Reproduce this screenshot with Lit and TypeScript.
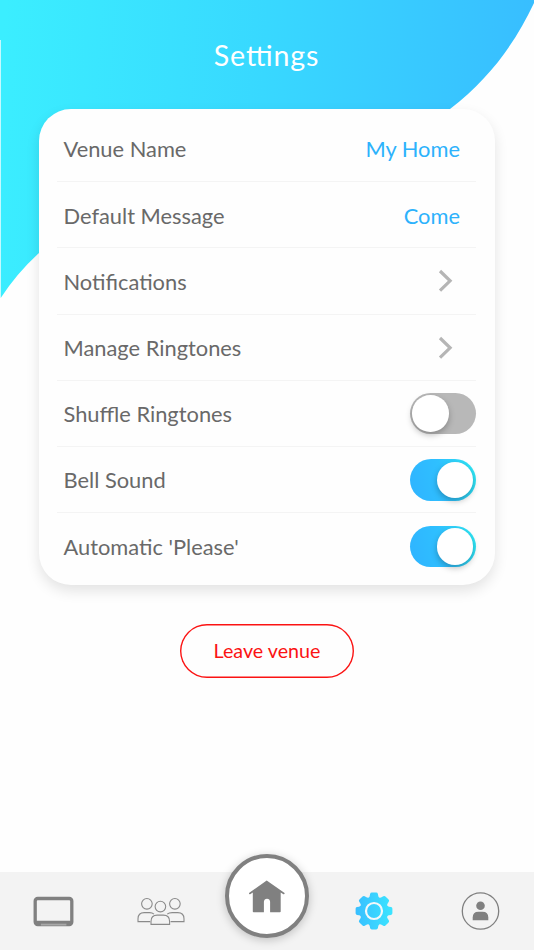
import { LitElement, html, css, svg } from "lit";
import { customElement, state } from "lit/decorators.js";

type Row = { label: string; kind: "value" | "link" | "toggle"; value?: string; on?: boolean };

@customElement("toggle-switch")
class ToggleSwitch extends LitElement {
  static properties = { on: { type: Boolean, reflect: true } };
  declare on: boolean;
  static styles = css`
    :host {
      display: flex;
      align-items: center;
      box-sizing: border-box;
      width: 66px;
      height: 41.5px;
      padding: 0 2.5px;
      border-radius: 21px;
      background: #b8b8b8;
    }
    :host([on]) {
      justify-content: flex-end;
      background: linear-gradient(75deg, #2fb6ff 10%, #2fc0ff 50%, #2ee6f5 95%);
    }
    .knob {
      width: 36.5px;
      height: 36.5px;
      border-radius: 50%;
      background: #fff;
      box-shadow: 0 3px 6px rgba(0, 0, 0, 0.26);
    }
  `;
  render() {
    return html`<div class="knob"></div>`;
  }
}

@customElement("app-root")
class AppRoot extends LitElement {
  @state() private rows: Row[] = [
    { label: "Venue Name", kind: "value", value: "My Home" },
    { label: "Default Message", kind: "value", value: "Come" },
    { label: "Notifications", kind: "link" },
    { label: "Manage Ringtones", kind: "link" },
    { label: "Shuffle Ringtones", kind: "toggle", on: false },
    { label: "Bell Sound", kind: "toggle", on: true },
    { label: "Automatic 'Please'", kind: "toggle", on: true },
  ];

  static styles = css`
    :host {
      display: flex;
      flex-direction: column;
      position: relative;
      box-sizing: border-box;
      height: 950px;
      overflow: hidden;
      background: #fefefe;
      font-family: Lato, Carlito, sans-serif;
      isolation: isolate;
    }
    .backdrop {
      position: absolute;
      left: 0;
      top: 0;
      z-index: -1;
    }
    .title {
      margin: 0;
      height: 109.4px;
      box-sizing: border-box;
      padding: 37px 1px 0 0;
      text-align: center;
      font-size: 28.6px;
      line-height: 36px;
      font-weight: 400;
      letter-spacing: 0.9px;
      font-feature-settings: "liga" 1;
      color: #fff;
    }
    .card {
      margin: 0 39px;
      height: 476px;
      box-sizing: border-box;
      padding: 6.7px 19.5px 0 18px;
      border-radius: 32px;
      background: #fefefe;
      box-shadow: 0 6px 14px rgba(0, 0, 0, 0.11);
    }
    .row {
      display: flex;
      align-items: center;
      justify-content: space-between;
      box-sizing: border-box;
      height: 66.2px;
      padding: 0.6px 0 0 6.5px;
      border-bottom: 1px solid #f4f4f4;
      font-size: 21.85px;
      color: #696969;
    }
    .row:last-child {
      border-bottom: 0;
    }
    .value {
      padding-right: 15.5px;
      color: #2db2fc;
    }
    .chevron {
      margin-right: 22px;
    }
    .leave {
      align-self: center;
      margin-top: 38.8px;
      width: 174px;
      height: 54px;
      box-sizing: border-box;
      border: 0;
      border-radius: 27px;
      box-shadow: inset 0 0 0 1.4px #fb1313;
      background: none;
      padding: 0 0 1px;
      font: 400 19.7px Lato, sans-serif;
      color: #fb1313;
    }
    .nav {
      display: grid;
      grid-template-columns: repeat(5, 1fr);
      align-items: center;
      justify-items: center;
      height: 78px;
      margin-top: auto;
      background: #f3f3f3;
    }
    .item {
      display: block;
      overflow: visible;
    }
    .home {
      display: flex;
      align-items: center;
      justify-content: center;
      box-sizing: border-box;
      width: 84px;
      height: 84px;
      margin-top: -30px;
      border: 4px solid #808080;
      border-radius: 50%;
      background: #fff;
      box-shadow: 0 2px 10px rgba(0, 0, 0, 0.22);
    }
  `;

  private control(row: Row) {
    if (row.kind === "value") return html`<span class="value">${row.value}</span>`;
    if (row.kind === "toggle") return html`<toggle-switch ?on=${row.on}></toggle-switch>`;
    return html`<svg class="chevron" width="16" height="24" viewBox="0 0 16 24">
      <path d="M2 2 L12.1 11.8 L2 21.7" fill="none" stroke="#b5b5b5" stroke-width="3.2" />
    </svg>`;
  }

  private gear() {
    const teeth = [0, 45, 90, 135, 180, 225, 270, 315];
    return html`<svg class="item" width="38" height="38" viewBox="-19 -19 38 38">
      <defs>
        <linearGradient id="g" gradientUnits="userSpaceOnUse" x1="-18" y1="0" x2="18" y2="0">
          <stop offset="0" stop-color="#38bfff" />
          <stop offset="1" stop-color="#3be4ff" />
        </linearGradient>
        <clipPath id="c">
          <circle r="14.4" />
          ${teeth.map(
            (a) =>
              svg`<path transform=${`rotate(${a})`} d="M-6.5 -13 Q-4.6 -13.2 -4.3 -15 L-3.9 -17 Q-3.6 -18.4 -2.2 -18.4 H2.2 Q3.6 -18.4 3.9 -17 L4.3 -15 Q4.6 -13.2 6.5 -13 V-8 H-6.5 Z" />`
          )}
        </clipPath>
      </defs>
      <rect x="-19" y="-19" width="38" height="38" fill="url(#g)" clip-path="url(#c)" />
      <circle r="8" fill="none" stroke="#f3f8fa" stroke-width="2.2" />
    </svg>`;
  }

  render() {
    return html`
      <svg class="backdrop" width="534" height="300" viewBox="0 0 534 300">
        <defs>
          <linearGradient id="sky" gradientUnits="userSpaceOnUse" x1="0" y1="80" x2="525" y2="115">
            <stop offset="0" stop-color="#3beeff" />
            <stop offset="0.5" stop-color="#38d8ff" />
            <stop offset="1" stop-color="#38beff" />
          </linearGradient>
        </defs>
        <path
          fill="url(#sky)"
          d="M0 0 H534 V3 C515 43 490 78 450 109 C380 165 120 165 39 253 Q17 273 0.7 298 V40 H0 Z"
        />
      </svg>
      <h1 class="title">Settings</h1>
      <section class="card">
        ${this.rows.map((row) => html`<div class="row"><span>${row.label}</span>${this.control(row)}</div>`)}
      </section>
      <button class="leave">Leave venue</button>
      <nav class="nav">
        <svg class="item" width="42" height="30" viewBox="-0.9 -0.7 42 30">
          <rect x="2.3" y="1.8" width="36.6" height="26" rx="2.5" fill="none" stroke="#808080" stroke-width="3.3" />
          <path d="M3 25.2 H38" stroke="#808080" stroke-width="2.2" />
          <path d="M8 27.9 H33.5" stroke="#a8a8a8" stroke-width="1.8" />
        </svg>
        <svg class="item" width="48" height="28" viewBox="-1 -0.8 48 28" fill="none" stroke="#8a8a8a" stroke-width="1.1">
          <circle cx="9.9" cy="6" r="5.3" />
          <circle cx="37.9" cy="6" r="5.3" />
          <circle cx="23.4" cy="8.8" r="5.3" />
          <path d="M13.2 23.8 H1 V21 Q1 14.8 7.2 14.8 H12.6 Q15.2 14.8 17 16.3" />
          <path d="M33.6 23.8 H47 V21 Q47 14.8 40.8 14.8 H35.2 Q32 14.8 30.2 16.3" />
          <path d="M14 26.6 V23.6 Q14 17.3 20.2 17.3 H26.4 Q32.6 17.3 32.6 23.6 V26.6 Z" />
        </svg>
        <div class="home">
          <svg width="38" height="34" viewBox="0 0 38 34">
            <path
              fill="#808080"
              d="M18.7 1.4 L36.6 14 Q36.8 15.6 35.4 15.2 L32.7 13.6 V32.4 Q32.7 33.2 31.9 33.2 H22.1 V22.8 Q21.8 19.8 19 19.8 Q16.2 19.8 15.9 22.8 V33.2 H5.6 Q4.8 33.2 4.8 32.4 V13.6 L2.2 15.2 Q0.8 15.6 1 14 Z"
            />
          </svg>
        </div>
        ${this.gear()}
        <svg class="item" width="38" height="38" viewBox="0.5 0 38 38">
          <circle cx="19" cy="19" r="18.2" fill="none" stroke="#808080" stroke-width="1.3" />
          <circle cx="19" cy="13.8" r="4.3" fill="#808080" />
          <path d="M11.2 28.2 V25.6 Q11.2 19.7 17 19.7 H21 Q26.8 19.7 26.8 25.6 V28.2 Z" fill="#808080" />
        </svg>
      </nav>
    `;
  }
}
